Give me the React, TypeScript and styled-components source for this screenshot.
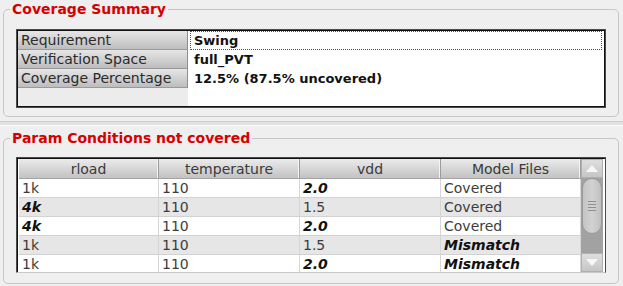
import { styled, createGlobalStyle } from "styled-components";

const GlobalStyle = createGlobalStyle`
  html, body {
    margin: 0;
    padding: 0;
    background: #efefef;
    font-family: "DejaVu Sans", "Liberation Sans", sans-serif;
    font-size: 14px;
    color: #222;
  }
`;

const Page = styled.div`
  width: 623px;
  height: 286px;
  overflow: hidden;
  display: flex;
  flex-direction: column;
`;

const Group = styled.fieldset<{ $bottom: number }>`
  margin: 0 4px 0 3px;
  padding: 0 12px ${(p) => p.$bottom}px 12px;
  border: 1px solid #c6c6c6;
  border-radius: 5px;
  min-width: 0;
`;

const Legend = styled.legend`
  margin-left: -6px;
  padding: 0 2px;
  height: 18px;
  line-height: 18px;
  color: #d60000;
  font-weight: bold;
  font-size: 14px;
`;

const Splitter = styled.div`
  height: 3px;
  margin: 4px 0 3px;
  border-top: 1px solid #cdcdcd;
  border-bottom: 1px solid #fafafa;
  background: #e2e2e2;
`;

const Frame = styled.div`
  margin-top: 11px;
  border: 1px solid #4a4a4a;
  box-shadow: inset 0 0 0 1px #111;
  padding: 2px 2px 1px 2px;
  background: #fff;
`;

const SummaryBox = styled.div`
  display: grid;
  grid-template-columns: 170px 1fr;
  grid-auto-rows: 19px;
  height: 75px;
  margin: -1px 0 0 -1px;
  background: linear-gradient(to right, #ececec 170px, #fff 170px);
`;

const RowLabel = styled.div`
  padding-left: 3px;
  line-height: 19px;
  color: #2a2a2a;
  background: linear-gradient(#e6e6e6, #bdbdbd);
  border-bottom: 1px solid #9a9a9a;
  border-right: 1px solid #8e8e8e;
  box-sizing: border-box;
  white-space: nowrap;
`;

const RowValue = styled.div<{ $focus?: boolean }>`
  margin: 0 1px 0 2px;
  padding-left: 3px;
  line-height: 17px;
  font-size: 13px;
  font-weight: bold;
  color: #111;
  border: 1px dotted ${(p) => (p.$focus ? "#555" : "transparent")};
  white-space: nowrap;
`;

const TableFrame = styled.div`
  margin-top: 10px;
  border: 1px solid #4a4a4a;
  border-bottom-color: #c8c8c8;
  box-shadow: inset 1px 1px 0 #111;
  padding: 1px 2px 0 2px;
  background: #fff;
  display: flex;
  height: 116px;
  box-sizing: border-box;
`;

const Grid = styled.div`
  flex: 1;
  display: grid;
  grid-template-columns: 140px 141px 141px 1fr;
  grid-template-rows: 20px repeat(5, 19px);
  overflow: hidden;
`;

const HeadCell = styled.div`
  text-align: center;
  line-height: 20px;
  color: #3a3a3a;
  background: linear-gradient(#ebebeb, #c2c2c2);
  border-bottom: 1px solid #a4a4a4;
  border-right: 1px solid #9c9c9c;
  box-shadow: inset -1px 0 0 #f4f4f4;
  box-sizing: border-box;
`;

const Cell = styled.div<{ $alt: boolean; $em: boolean }>`
  padding-left: 3px;
  line-height: 19px;
  box-sizing: border-box;
  background: ${(p) => (p.$alt ? "#e6e6e6" : "#fff")};
  border-right: 1px solid #d6d6d6;
  border-bottom: 1px solid #d2d2d2;
  color: ${(p) => (p.$em ? "#111" : "#3c3c3c")};
  font-weight: ${(p) => (p.$em ? "bold" : "normal")};
  font-style: ${(p) => (p.$em ? "italic" : "normal")};
  white-space: nowrap;
`;

const ScrollBar = styled.div`
  width: 22px;
  display: flex;
  flex-direction: column;
  background: #a2a2a2;
`;

const ArrowButton = styled.div<{ $h: number }>`
  height: ${(p) => p.$h}px;
  display: flex;
  align-items: center;
  justify-content: center;
  background: linear-gradient(#dedede, #c6c6c6);
  border: 1px solid #b0b0b0;
  box-sizing: border-box;
`;

const Handle = styled.div`
  height: 56px;
  margin: 0 1px;
  border-radius: 10px;
  background: linear-gradient(to right, #c4c4c4, #d2d2d2 50%, #c0c0c0);
  border: 1px solid #9a9a9a;
  box-sizing: border-box;
  display: flex;
  flex-direction: column;
  align-items: center;
  justify-content: center;
  gap: 2px;
`;

const Grip = styled.span`
  width: 8px;
  height: 1px;
  background: #8e8e8e;
`;

const Track = styled.div`
  flex: 1;
`;

const Arrow = ({ up }: { up?: boolean }) => (
  <svg width="12" height="7" viewBox="0 0 12 7">
    <polygon points={up ? "6,0 12,7 0,7" : "0,0 12,0 6,7"} fill="#f7f7f7" />
  </svg>
);

type Row = { rload: string; temp: string; vdd: string; model: string; em: [boolean, boolean, boolean, boolean] };

const rows: Row[] = [
  { rload: "1k", temp: "110", vdd: "2.0", model: "Covered", em: [false, false, true, false] },
  { rload: "4k", temp: "110", vdd: "1.5", model: "Covered", em: [true, false, false, false] },
  { rload: "4k", temp: "110", vdd: "2.0", model: "Covered", em: [true, false, true, false] },
  { rload: "1k", temp: "110", vdd: "1.5", model: "Mismatch", em: [false, false, false, true] },
  { rload: "1k", temp: "110", vdd: "2.0", model: "Mismatch", em: [false, false, true, true] },
];

export default function App() {
  return (
    <Page>
      <GlobalStyle />
      <Group $bottom={8}>
        <Legend>Coverage Summary</Legend>
        <Frame>
          <SummaryBox>
            <RowLabel>Requirement</RowLabel>
            <RowValue $focus>Swing</RowValue>
            <RowLabel>Verification Space</RowLabel>
            <RowValue>full_PVT</RowValue>
            <RowLabel>Coverage Percentage</RowLabel>
            <RowValue>12.5% (87.5% uncovered)</RowValue>
          </SummaryBox>
        </Frame>
      </Group>
      <Splitter />
      <Group $bottom={10}>
        <Legend>Param Conditions not covered</Legend>
        <TableFrame>
          <Grid>
            <HeadCell>rload</HeadCell>
            <HeadCell>temperature</HeadCell>
            <HeadCell>vdd</HeadCell>
            <HeadCell>Model Files</HeadCell>
            {rows.map((r, i) =>
              [r.rload, r.temp, r.vdd, r.model].map((v, j) => (
                <Cell key={`${i}-${j}`} $alt={i % 2 === 1} $em={r.em[j]}>
                  {v}
                </Cell>
              ))
            )}
          </Grid>
          <ScrollBar>
            <ArrowButton $h={19}>
              <Arrow up />
            </ArrowButton>
            <Handle>
              <Grip />
              <Grip />
              <Grip />
              <Grip />
            </Handle>
            <Track />
            <ArrowButton $h={19}>
              <Arrow />
            </ArrowButton>
          </ScrollBar>
        </TableFrame>
      </Group>
    </Page>
  );
}
